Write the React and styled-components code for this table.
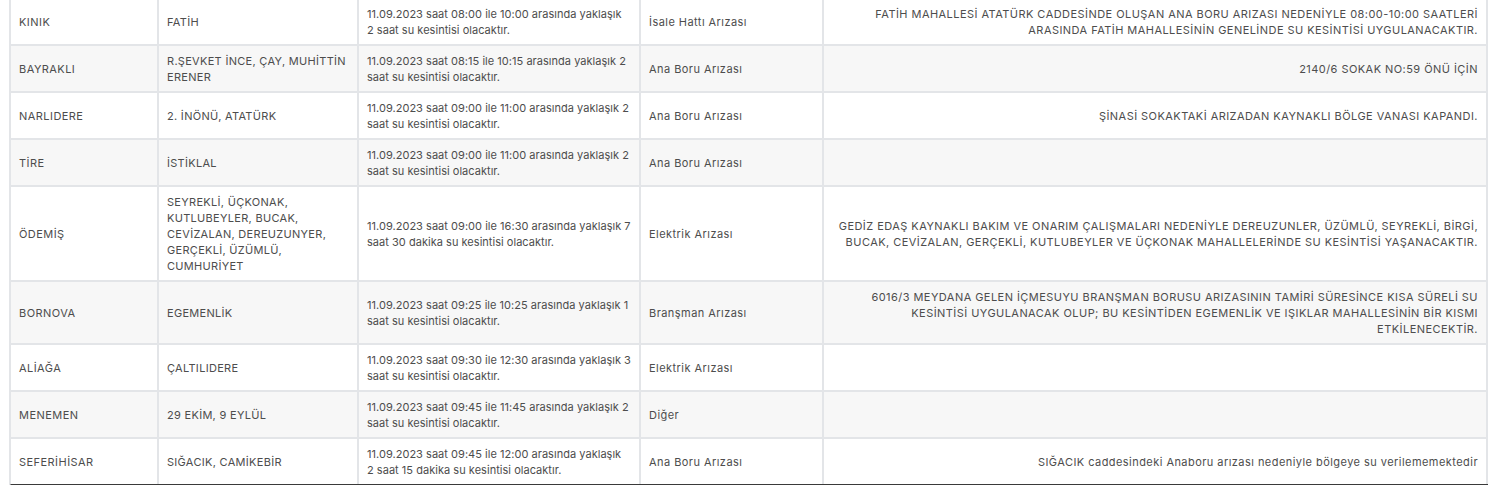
import styled, { createGlobalStyle } from 'styled-components';

const GlobalStyle = createGlobalStyle`
  html, body {
    margin: 0;
    padding: 0;
    background: #ffffff;
  }
  body {
    font-family: Inter, 'Open Sans', 'Liberation Sans', sans-serif;
  }
`;

const outages = [
  {
    district: 'KINIK',
    areas: 'FATİH',
    time: '11.09.2023 saat 08:00 ile 10:00 arasında yaklaşık 2 saat su kesintisi olacaktır.',
    type: 'İsale Hattı Arızası',
    note: 'FATİH MAHALLESİ ATATÜRK CADDESİNDE OLUŞAN ANA BORU ARIZASI NEDENİYLE 08:00-10:00 SAATLERİ ARASINDA FATİH MAHALLESİNİN GENELİNDE SU KESİNTİSİ UYGULANACAKTIR.',
  },
  {
    district: 'BAYRAKLI',
    areas: 'R.ŞEVKET İNCE, ÇAY, MUHİTTİN ERENER',
    time: '11.09.2023 saat 08:15 ile 10:15 arasında yaklaşık 2 saat su kesintisi olacaktır.',
    type: 'Ana Boru Arızası',
    note: '2140/6 SOKAK NO:59 ÖNÜ İÇİN',
  },
  {
    district: 'NARLIDERE',
    areas: '2. İNÖNÜ, ATATÜRK',
    time: '11.09.2023 saat 09:00 ile 11:00 arasında yaklaşık 2 saat su kesintisi olacaktır.',
    type: 'Ana Boru Arızası',
    note: 'ŞİNASİ SOKAKTAKİ ARIZADAN KAYNAKLI BÖLGE VANASI KAPANDI.',
  },
  {
    district: 'TİRE',
    areas: 'İSTİKLAL',
    time: '11.09.2023 saat 09:00 ile 11:00 arasında yaklaşık 2 saat su kesintisi olacaktır.',
    type: 'Ana Boru Arızası',
    note: '',
  },
  {
    district: 'ÖDEMİŞ',
    areas: 'SEYREKLİ, ÜÇKONAK, KUTLUBEYLER, BUCAK, CEVİZALAN, DEREUZUNYER, GERÇEKLİ, ÜZÜMLÜ, CUMHURİYET',
    time: '11.09.2023 saat 09:00 ile 16:30 arasında yaklaşık 7 saat 30 dakika su kesintisi olacaktır.',
    type: 'Elektrik Arızası',
    note: 'GEDİZ EDAŞ KAYNAKLI BAKIM VE ONARIM ÇALIŞMALARI NEDENİYLE DEREUZUNLER, ÜZÜMLÜ, SEYREKLİ, BİRGİ, BUCAK, CEVİZALAN, GERÇEKLİ, KUTLUBEYLER VE ÜÇKONAK MAHALLELERİNDE SU KESİNTİSİ YAŞANACAKTIR.',
  },
  {
    district: 'BORNOVA',
    areas: 'EGEMENLİK',
    time: '11.09.2023 saat 09:25 ile 10:25 arasında yaklaşık 1 saat su kesintisi olacaktır.',
    type: 'Branşman Arızası',
    note: '6016/3 MEYDANA GELEN İÇMESUYU BRANŞMAN BORUSU ARIZASININ TAMİRİ SÜRESİNCE KISA SÜRELİ SU KESİNTİSİ UYGULANACAK OLUP; BU KESİNTİDEN EGEMENLİK VE IŞIKLAR MAHALLESİNİN BİR KISMI ETKİLENECEKTİR.',
  },
  {
    district: 'ALİAĞA',
    areas: 'ÇALTILIDERE',
    time: '11.09.2023 saat 09:30 ile 12:30 arasında yaklaşık 3 saat su kesintisi olacaktır.',
    type: 'Elektrik Arızası',
    note: '',
  },
  {
    district: 'MENEMEN',
    areas: '29 EKİM, 9 EYLÜL',
    time: '11.09.2023 saat 09:45 ile 11:45 arasında yaklaşık 2 saat su kesintisi olacaktır.',
    type: 'Diğer',
    note: '',
  },
  {
    district: 'SEFERİHİSAR',
    areas: 'SIĞACIK, CAMİKEBİR',
    time: '11.09.2023 saat 09:45 ile 12:00 arasında yaklaşık 2 saat 15 dakika su kesintisi olacaktır.',
    type: 'Ana Boru Arızası',
    note: 'SIĞACIK caddesindeki Anaboru arızası nedeniyle bölgeye su verilememektedir',
  },
];

const Page = styled.div`
  padding: 0 11px 0 9px;
  margin-top: -1px;
  overflow: hidden;
`;

const Table = styled.table`
  width: 1479px;
  table-layout: fixed;
  border-collapse: separate;
  border-spacing: 0;
  border-left: 2px solid #e3e5e8;
  border-bottom: 2px solid #3a3a3a;
  font-size: 11px;
  line-height: 16px;
  color: #4d4d4d;
`;

const Row = styled.tr`
  background: ${(p) => (p.$striped ? '#f7f7f7' : '#ffffff')};
`;

const Cell = styled.td`
  box-sizing: border-box;
  padding: 6.5px 8px;
  vertical-align: middle;
  text-align: ${(p) => p.$align || 'left'};
  letter-spacing: ${(p) => p.$spacing || '0.45px'};
  border-right: 2px solid #e3e5e8;
  border-bottom: 2px solid #e3e5e8;
  overflow-wrap: break-word;

  tr:last-child > & {
    border-bottom: none;
  }
`;

export default function App() {
  return (
    <Page>
      <GlobalStyle />
      <Table>
        <colgroup>
          <col style={{ width: 148 }} />
          <col style={{ width: 200 }} />
          <col style={{ width: 282 }} />
          <col style={{ width: 183 }} />
          <col />
        </colgroup>
        <tbody>
          {outages.map((o, i) => (
            <Row key={o.district} $striped={i % 2 === 1}>
              <Cell>{o.district}</Cell>
              <Cell $spacing="0.3px">{o.areas}</Cell>
              <Cell $spacing="0.03px">{o.time}</Cell>
              <Cell>{o.type}</Cell>
              <Cell $align="right">{o.note}</Cell>
            </Row>
          ))}
        </tbody>
      </Table>
    </Page>
  );
}
